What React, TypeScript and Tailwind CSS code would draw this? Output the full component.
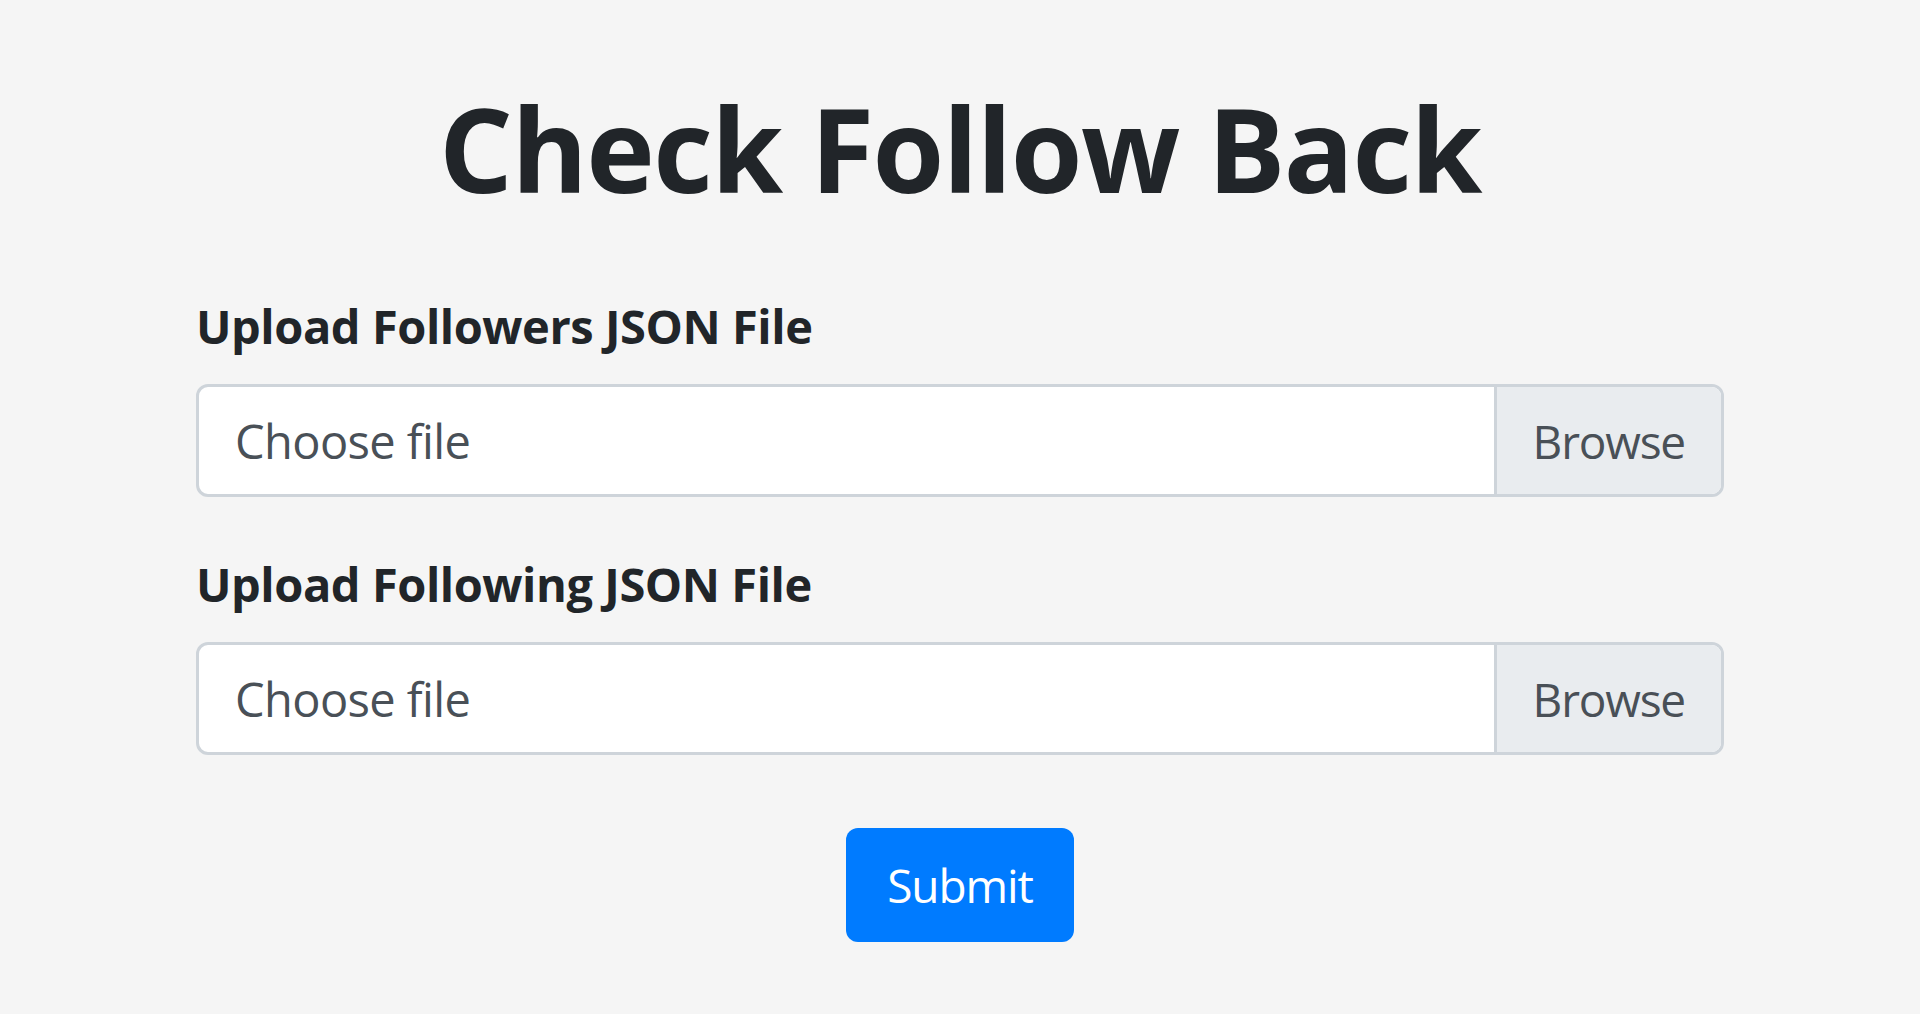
function FileField({ label }: { label: string }) {
    return (
        <div className="mb-[51px]">
            <label className="mb-[22px] block text-[47px] leading-[72px] font-bold tracking-[-0.45px] text-[#212529]">
                {label}
            </label>
            <div className="flex h-[113px] overflow-hidden rounded-[12px] border-[3px] border-[#ced4da] bg-white">
                <div className="flex flex-1 items-center px-[36px] text-[47px] leading-[72px] tracking-[-0.6px] text-[#495057]">
                    Choose file
                </div>
                <div className="flex items-center border-l-[3px] border-[#ced4da] bg-[#e9ecef] px-[36px] text-[46px] leading-[72px] tracking-[-1.2px] text-[#495057]">
                    Browse
                </div>
            </div>
        </div>
    );
}

export default function App() {
    return (
        <div className="min-h-screen bg-[#f5f5f5] font-['Open_Sans',sans-serif]">
            <main className="mx-auto w-[1528px] pt-[78px]">
                <h1 className="mb-[72px] text-center text-[116px] leading-[140px] font-bold tracking-[-1.5px] text-[#212529]">
                    Check Follow Back
                </h1>

                <form>
                    <FileField label="Upload Followers JSON File" />
                    <FileField label="Upload Following JSON File" />

                    <div className="-mt-[51px] flex justify-center pt-[73px]">
                        <button
                            type="button"
                            className="h-[114px] w-[228px] rounded-[12px] bg-[#007bff] text-[46px] leading-[72px] tracking-[-1.1px] text-white"
                        >
                            Submit
                        </button>
                    </div>
                </form>
            </main>
        </div>
    );
}
